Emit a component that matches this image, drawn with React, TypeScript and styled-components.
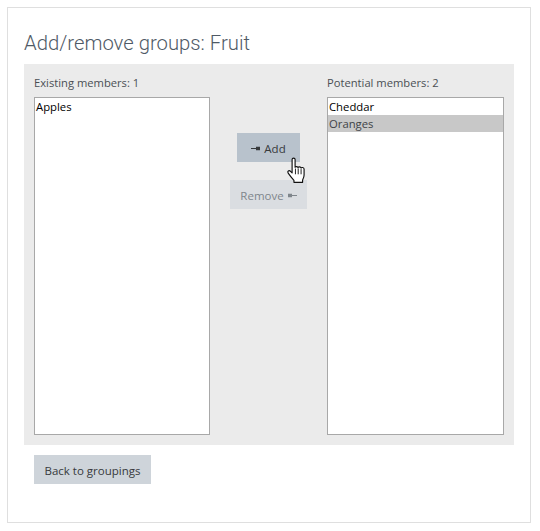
import styled, { createGlobalStyle } from "styled-components";

const GlobalStyle = createGlobalStyle`
  html, body {
    margin: 0;
    padding: 0;
    background: #fff;
  }
  body {
    font-family: "Open Sans", "Noto Sans", sans-serif;
    font-size: 12px;
    color: #373a3c;
  }
`;

const Page = styled.div`
  width: 540px;
  height: 531px;
  padding: 7px 9px 8px 7px;
  box-sizing: border-box;
`;

const Card = styled.div`
  height: 100%;
  box-sizing: border-box;
  border: 1px solid #dfdfdf;
  padding: 20px 16px 0;
`;

const Title = styled.h2`
  margin: 0 0 8px;
  padding-top: 1px;
  height: 27px;
  font-family: Roboto, "Open Sans", sans-serif;
  font-size: 20.3px;
  line-height: 28px;
  font-weight: 300;
  color: #4f5a66;
`;

const Panel = styled.div`
  display: grid;
  grid-template-columns: 176px 1fr 177px;
  height: 381px;
  box-sizing: border-box;
  padding: 10px;
  background: #ebebeb;
`;

const Column = styled.div`
  display: flex;
  flex-direction: column;
  min-height: 0;
`;

const Label = styled.label`
  height: 23px;
  line-height: 18px;
  font-size: 11.2px;
  color: #4a4f54;
`;

const ListBox = styled.ul`
  flex: 1;
  margin: 0;
  padding: 0;
  list-style: none;
  background: #fff;
  border: 1px solid #a8a8a8;
`;

const Option = styled.li<{ $selected?: boolean }>`
  height: 17px;
  padding-left: 1px;
  line-height: 17px;
  font-size: 11.3px;
  color: ${(props) => (props.$selected ? "#3f4347" : "#000")};
  background: ${(props) => (props.$selected ? "#c8c8c8" : "transparent")};
`;

const Actions = styled.div`
  position: relative;
  display: flex;
  flex-direction: column;
  align-items: center;
  gap: 18px;
  padding-top: 59px;
`;

const Button = styled.button<{
  $tone?: "hover" | "plain" | "disabled";
  $wide?: boolean;
}>`
  display: inline-flex;
  align-items: center;
  justify-content: center;
  gap: 4px;
  height: 29px;
  padding: 1px ${(props) => (props.$wide ? "14px" : "10.5px")} 0;
  border: none;
  font-family: inherit;
  font-size: 11.5px;
  color: ${(props) => (props.$tone === "disabled" ? "#7f868c" : "#373a3c")};
  background: ${(props) =>
    props.$tone === "hover"
      ? "#b8c2cc"
      : props.$tone === "disabled"
      ? "#dadde1"
      : "#ced4da"};
`;

const Footer = styled.div`
  padding: 10px 10px 0;
`;

const Cursor = styled.svg`
  position: absolute;
  left: 76px;
  top: 83px;
`;

function ArrowIcon({ flip }: { flip?: boolean }) {
  return (
    <svg
      width="9"
      height="5"
      viewBox="0 0 9 5"
      style={flip ? { transform: "scaleX(-1)" } : undefined}>
      <path d="M0 2h5V0.800h4v3.400H5V3H0z" fill="currentColor" />
    </svg>
  );
}

export default function App() {
  return (
    <Page>
      <GlobalStyle />
      <Card>
        <Title>Add/remove groups: Fruit</Title>
        <Panel>
          <Column>
            <Label>Existing members: 1</Label>
            <ListBox>
              <Option>Apples</Option>
            </ListBox>
          </Column>
          <Actions>
            <Button $tone="hover" $wide>
              <ArrowIcon /> Add
            </Button>
            <Button $tone="disabled">
              Remove <ArrowIcon flip />
            </Button>
            <Cursor width="22" height="28" viewBox="0 0 18.500 24.300">
              <path
                d="M5 2.200c0-1.600 2.600-1.600 2.600 0V9c0-.9 2.500-1 2.600.3 0-1 2.400-1 2.600.4 .2-.9 2.500-.8 2.600.8v5.200c0 2-.6 3-1.300 4.300v2H6.600v-1.700C5 18.500 3.300 16.500 1.600 14c-1-1.500.6-2.800 2-1.600L5 13.800z"
                fill="#fff"
                stroke="#111"
                strokeWidth="1"
                strokeLinejoin="round"
              />
              <path
                d="M7.900 10v5M10.300 10v5M12.800 10.500v4.500"
                stroke="#111"
                strokeWidth="0.800"
                fill="none"
              />
            </Cursor>
          </Actions>
          <Column>
            <Label>Potential members: 2</Label>
            <ListBox>
              <Option>Cheddar</Option>
              <Option $selected>Oranges</Option>
            </ListBox>
          </Column>
        </Panel>
        <Footer>
          <Button>Back to groupings</Button>
        </Footer>
      </Card>
    </Page>
  );
}
